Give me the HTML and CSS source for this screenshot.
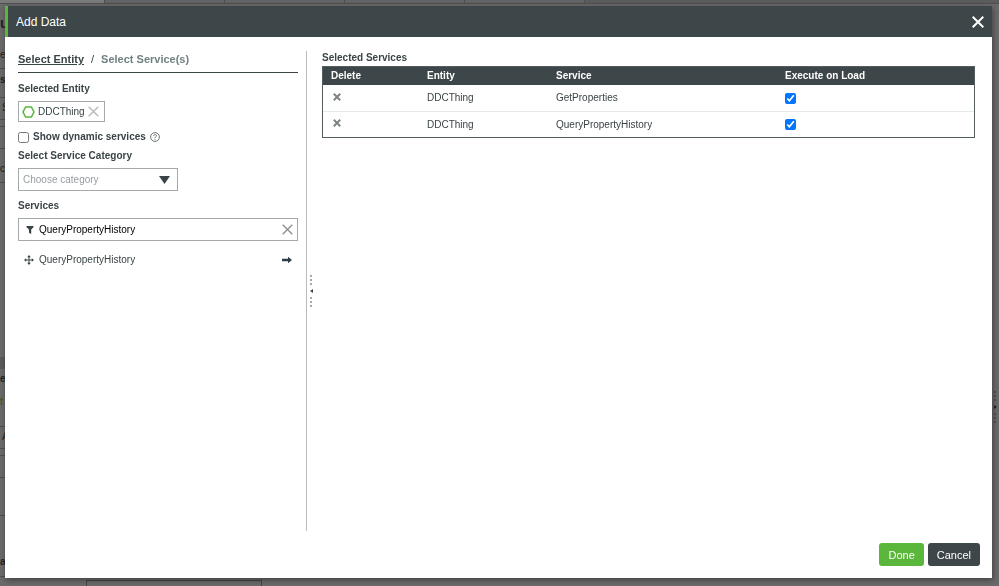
FILE: index.html
```html
<!DOCTYPE html>
<html lang="en">
<head>
  <meta charset="UTF-8">
  <meta name="viewport" content="width=device-width, initial-scale=1">
  <title>Add Data</title>
  <link rel="stylesheet" href="styles.css">
</head>
<body>
  <div class="page" aria-hidden="true">
    <div class="tabs">
      <span class="tab active"></span>
      <span class="tab"></span>
      <span class="tab"></span>
      <span class="tab"></span>
      <span class="tab"></span>
    </div>
    <div class="workspace">
      <div class="props">
        <div class="prop heading">u</div>
        <div class="prop">er</div>
        <div class="prop bold">s</div>
        <div class="prop field">S</div>
        <div class="prop field"></div>
        <div class="prop">ch</div>
      </div>
      <div class="props">
        <div class="prop band"></div>
        <div class="prop caption">e</div>
        <div class="prop add">t</div>
        <div class="prop field">A</div>
        <div class="prop field"></div>
        <div class="prop tall"></div>
        <div class="prop last">a</div>
      </div>
    </div>
    <div class="footer-field"></div>
    <div class="grip page-grip"><i></i><b></b><i></i></div>
  </div>

  <div class="overlay">
    <section class="modal" role="dialog" aria-labelledby="modalTitle">
      <header class="modal-header">
        <h1 id="modalTitle">Add Data</h1>
        <button class="icon-btn close" aria-label="Close">
          <svg width="12" height="12" viewBox="0 0 12 12"><path d="M.7.7l10.600 10.600M11.300.7L.7 11.300" stroke="#fff" stroke-width="2" fill="none"/></svg>
        </button>
      </header>

      <div class="modal-body">
        <div class="picker">
          <nav class="steps">
            <a class="step current" href="#entity">Select Entity</a>
            <span class="sep">/</span>
            <a class="step" href="#services">Select Service(s)</a>
          </nav>

          <h2 class="label">Selected Entity</h2>
          <div class="entity-tag">
            <svg width="13" height="12" viewBox="0 0 13 12"><path d="M3.600 1h5.800L12 6l-2.600 5H3.600L1 6z" fill="none" stroke="#5bb73b" stroke-width="1.600"/></svg>
            <span>DDCThing</span>
            <button class="icon-btn" aria-label="Remove entity">
              <svg width="11" height="11" viewBox="0 0 11 11"><path d="M.7.7l9.600 9.600M10.300.7L.7 10.300" stroke="#b8bcbe" stroke-width="1.500" fill="none"/></svg>
            </button>
          </div>

          <div class="dynamic">
            <input type="checkbox" id="dynamic">
            <label for="dynamic">Show dynamic services</label>
            <svg width="10" height="10" viewBox="0 0 10 10" fill="none" stroke="#5c6366"><circle cx="5" cy="5" r="4.400" stroke-width=".9"/><path d="M3.600 4c0-1.900 2.900-1.900 2.900-.2C6.500 4.800 5 4.800 5 6M5 6.900v1" stroke-width=".9"/></svg>
          </div>

          <label class="label" for="category">Select Service Category</label>
          <div class="select-box">
            <select id="category">
              <option>Choose category</option>
            </select>
            <svg class="caret" width="11" height="8" viewBox="0 0 11 8"><path d="M0 0h11L5.500 8z" fill="#3a4446"/></svg>
          </div>

          <label class="label" for="filter">Services</label>
          <div class="filter-box">
            <svg width="8" height="8" viewBox="0 0 8 8"><path d="M.5 0h7v1.300L5.200 3.500V8L3 6.800V3.500L.5 1.300z" fill="#3a4446"/></svg>
            <input type="text" id="filter" value="QueryPropertyHistory">
            <button class="icon-btn" aria-label="Clear filter">
              <svg width="11" height="11" viewBox="0 0 11 11"><path d="M.7.7l9.600 9.600M10.300.7L.7 10.300" stroke="#8c9193" stroke-width="1.400" fill="none"/></svg>
            </button>
          </div>

          <ul class="service-list">
            <li>
              <svg width="10" height="10" viewBox="0 0 10 10"><path d="M5 1v8M1 5h8" stroke="#3a4446"/><path d="M5 0l1.800 2.200H3.200zM5 10l1.800-2.200H3.200zM0 5l2.200-1.800v3.600zM10 5L7.800 3.200v3.600z" fill="#3a4446"/></svg>
              <span>QueryPropertyHistory</span>
              <button class="icon-btn" aria-label="Add service">
                <svg width="10" height="8" viewBox="0 0 10 8"><path d="M0 2.800h6V.8L10 4 6 7.200v-2H0z" fill="#2f3d44"/></svg>
              </button>
            </li>
          </ul>
        </div>

        <div class="splitter">
          <div class="grip"><i></i><b></b><i></i></div>
        </div>

        <div class="selected">
          <h2 class="label">Selected Services</h2>
          <table class="services">
            <thead>
              <tr>
                <th class="col-delete">Delete</th>
                <th class="col-entity">Entity</th>
                <th class="col-service">Service</th>
                <th>Execute on Load</th>
              </tr>
            </thead>
            <tbody>
              <tr>
                <td><button class="icon-btn" aria-label="Delete GetProperties"><svg width="8" height="8" viewBox="0 0 8 8"><path d="M.8.8l6.400 6.400M7.200.8L.8 7.200" stroke="#7d8284" stroke-width="2" fill="none"/></svg></button></td>
                <td>DDCThing</td>
                <td>GetProperties</td>
                <td><input type="checkbox" aria-label="Execute GetProperties on load" checked></td>
              </tr>
              <tr>
                <td><button class="icon-btn" aria-label="Delete QueryPropertyHistory"><svg width="8" height="8" viewBox="0 0 8 8"><path d="M.8.8l6.400 6.400M7.200.8L.8 7.200" stroke="#7d8284" stroke-width="2" fill="none"/></svg></button></td>
                <td>DDCThing</td>
                <td>QueryPropertyHistory</td>
                <td><input type="checkbox" aria-label="Execute QueryPropertyHistory on load" checked></td>
              </tr>
            </tbody>
          </table>
        </div>
      </div>

      <footer class="modal-footer">
        <button class="btn primary">Done</button>
        <button class="btn">Cancel</button>
      </footer>
    </section>
  </div>
</body>
</html>
```

FILE: styles.css
```css
:root {
  --dark: #3d4648;
  --text: #3a4446;
  --muted: #6f8083;
  --border: #a3a8aa;
  --green: #5bb73b;
}
* { box-sizing: border-box; }
body {
  margin: 0;
  height: 100vh;
  overflow: hidden;
  font-family: "Liberation Sans", Arial, sans-serif;
  font-size: 10px;
  line-height: 12px;
  color: var(--text);
  background: #6a6a6a;
}
h1, h2, ul { margin: 0; padding: 0; }

/* page behind the dialog */
.page {
  height: 100vh;
  display: flex;
  flex-direction: column;
  color: #222;
}
.tabs {
  display: flex;
  height: 4px;
  background: #5c5c5c;
  border-bottom: 1px solid #505050;
}
.tab { width: 120px; border-right: 1px solid #505050; background: #646466; }
.tab.active { width: 105px; background: #7a7a7a; }
.workspace {
  flex: 1;
  display: flex;
  flex-direction: column;
  justify-content: space-between;
  width: 260px;
  padding-bottom: 3px;
}
.prop {
  height: 28px;
  line-height: 27px;
  border-bottom: 1px solid #505050;
}
.prop.heading { height: 37px; line-height: 38px; font-size: 14px; font-weight: bold; border: none; }
.prop.bold { line-height: 22px; font-weight: bold; border: none; }
.prop.field {
  height: 23px;
  line-height: 20px;
  margin-bottom: 6px;
  padding-left: 2px;
  border-top: 1px solid #505050;
}
.prop.band { height: 12px; background: #5c5c5c; border: none; }
.prop.caption { height: 19px; line-height: 19px; font-weight: bold; border: none; }
.prop.add { height: 38px; color: #2c5a1e; border: none; }
.prop.tall { height: 32px; }
.prop.last { height: 61px; padding-top: 32px; font-weight: bold; }
.footer-field {
  width: 176px;
  height: 6px;
  margin-left: 86px;
  border: 1px solid #444;
  border-bottom: none;
}

.overlay {
  position: fixed;
  inset: 0;
  display: flex;
  padding: 6px 7px 8px 5px;
}
.modal {
  flex: 1;
  display: flex;
  flex-direction: column;
  min-width: 0;
  background: #fff;
  box-shadow: 1px 2px 6px rgba(0, 0, 0, 0.4);
}
.modal-header {
  display: flex;
  justify-content: space-between;
  align-items: center;
  height: 31px;
  padding: 0 8px;
  background: var(--dark);
  border-left: 3px solid var(--green);
}
.modal-header h1 {
  font-size: 12px;
  font-weight: normal;
  color: #fff;
}
.icon-btn {
  display: flex;
  padding: 0;
  border: none;
  background: none;
  cursor: pointer;
}

.modal-body {
  flex: 1;
  display: flex;
  padding: 14px 17px 0 13px;
}
.picker { width: 280px; }
.steps {
  display: flex;
  gap: 7px;
  height: 22px;
  padding-top: 2px;
  margin-bottom: 10px;
  border-bottom: 1px solid var(--text);
  font-size: 11px;
  font-weight: bold;
}
.step { color: var(--muted); text-decoration: none; }
.step.current { color: var(--text); text-decoration: underline; }
.sep { font-weight: normal; }
.label {
  display: block;
  font-size: 10px;
  font-weight: bold;
}

.entity-tag {
  display: flex;
  align-items: center;
  gap: 3px;
  width: fit-content;
  height: 21px;
  margin-top: 6px;
  padding: 0 5px 0 3px;
  border: 1px solid var(--border);
}
.dynamic {
  display: flex;
  align-items: center;
  gap: 4px;
  height: 12px;
  margin: 9px 0 7px;
  font-weight: bold;
}
input[type="checkbox"] {
  width: 11px;
  height: 11px;
  margin: 0;
}
.select-box {
  position: relative;
  width: 160px;
  margin: 6px 0 9px;
}
.select-box select {
  display: block;
  width: 100%;
  height: 23px;
  padding: 0 4px;
  border: 1px solid var(--border);
  border-radius: 0;
  appearance: none;
  background: #fff;
  font: inherit;
  color: #979da0;
}
.caret {
  position: absolute;
  top: 8px;
  right: 8px;
  pointer-events: none;
}
.filter-box {
  display: flex;
  align-items: center;
  gap: 5px;
  height: 23px;
  margin-top: 6px;
  padding: 0 4px 0 7px;
  border: 1px solid var(--border);
}
.filter-box input {
  flex: 1;
  min-width: 0;
  padding: 0;
  border: none;
  outline: none;
  font: inherit;
  color: #000;
}
.service-list { list-style: none; }
.service-list li {
  display: flex;
  align-items: center;
  gap: 5px;
  height: 38px;
  padding: 0 6px;
}
.service-list span { flex: 1; }

.splitter {
  display: flex;
  align-items: center;
  width: 16px;
  margin-left: 8px;
  border-left: 1px solid #b9bcbd;
}
.grip {
  display: flex;
  flex-direction: column;
  align-items: center;
  gap: 4px;
  width: 8px;
}
.grip i {
  width: 2px;
  height: 10px;
  background: repeating-linear-gradient(#a5a9ab 0 2px, transparent 2px 4px);
}
.grip b {
  border: 2px solid transparent;
  border-left: none;
  border-right: 3px solid #444;
}
.page-grip {
  position: absolute;
  top: 391px;
  right: 0;
}
.page-grip i { background: repeating-linear-gradient(#505050 0 2px, transparent 2px 4px); }
.page-grip b { border: 2px solid transparent; border-right: none; border-left: 3px solid #222; }

.selected { flex: 1; padding-top: 1px; }
.services {
  width: 100%;
  margin-top: 2px;
  border: 1px solid #555c5f;
  border-collapse: separate;
  border-spacing: 0;
  table-layout: fixed;
}
.services th {
  height: 18px;
  padding: 0 8px;
  background: var(--dark);
  color: #fff;
  text-align: left;
}
.services td {
  height: 26px;
  padding: 0 8px;
}
.services tr + tr td { border-top: 1px solid #e6e8e9; }
.services td .icon-btn { margin: 0 2px 3px; }
.services td input { display: block; }
.col-delete { width: 96px; }
.col-entity { width: 129px; }
.col-service { width: 229px; }

.modal-footer {
  display: flex;
  justify-content: flex-end;
  gap: 4px;
  padding: 12px;
}
.btn {
  height: 23px;
  padding: 0 9px;
  border: none;
  border-radius: 3px;
  background: var(--dark);
  font: inherit;
  font-size: 11px;
  color: #fff;
  cursor: pointer;
}
.btn.primary { background: var(--green); }
```
